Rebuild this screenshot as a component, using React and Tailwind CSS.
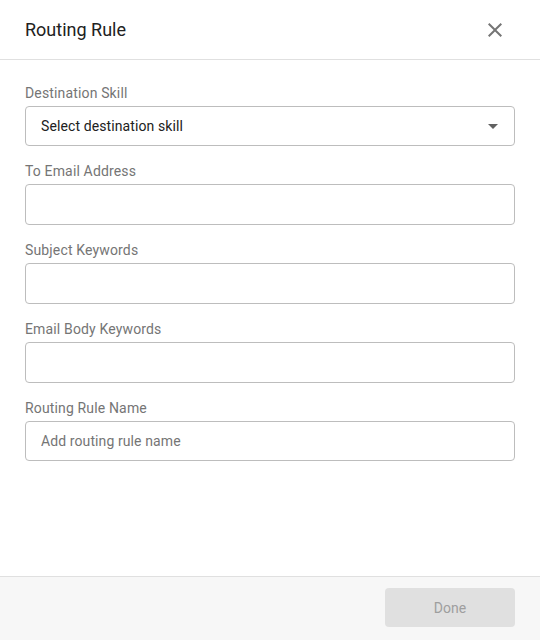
import React, { useState } from 'react';

const font = { fontFamily: 'Roboto, "Noto Sans", sans-serif' };

function CloseIcon() {
  return (
    <svg viewBox="0 0 24 24" className="w-6 h-6" fill="#757575">
      <path d="M19 6.41L17.59 5 12 10.59 6.41 5 5 6.41 10.59 12 5 17.59 6.41 19 12 13.41 17.59 19 19 17.59 13.41 12z" />
    </svg>
  );
}

function ArrowDropDown() {
  return (
    <svg viewBox="0 0 24 24" className="w-6 h-6" fill="#616161">
      <path d="M7 10l5 5 5-5z" />
    </svg>
  );
}

function Field({ label, children }) {
  return (
    <div className="flex flex-col">
      <label className="text-sm leading-5 tracking-[0.15px] text-[#757575] mb-[3px]">{label}</label>
      {children}
    </div>
  );
}

function TextInput({ value, onChange, placeholder, height = 'h-[41px]' }) {
  return (
    <input
      value={value}
      onChange={(e) => onChange(e.target.value)}
      placeholder={placeholder}
      className={`${height} w-full rounded border border-[#bdbdbd] px-[15px] text-sm tracking-[0.1px] text-[#212121] placeholder:text-[#757575] outline-none`}
      style={font}
    />
  );
}

export default function App() {
  const [form, setForm] = useState({
    toEmail: '',
    subject: '',
    body: '',
    name: '',
  });

  const set = (key) => (v) => setForm((f) => ({ ...f, [key]: v }));

  return (
    <div className="h-[640px] w-[540px] bg-white flex flex-col" style={font}>
      {/* Header */}
      <div className="h-[60px] flex items-center justify-between pl-[25px] pr-[33px] border-b border-[#e0e0e0] shrink-0">
        <h2 className="text-lg text-[#212121]">Routing Rule</h2>
        <button className="w-6 h-6 flex items-center justify-center">
          <CloseIcon />
        </button>
      </div>

      {/* Form */}
      <div className="flex-1 px-[25px] pt-[23px] flex flex-col gap-[15px]">
        <Field label="Destination Skill">
          <div className="h-[40px] w-full rounded border border-[#bdbdbd] flex items-center justify-between pl-[15px] pr-[9px]">
            <span className="text-sm tracking-[0.1px] text-[#212121]">Select destination skill</span>
            <ArrowDropDown />
          </div>
        </Field>
        <Field label="To Email Address">
          <TextInput value={form.toEmail} onChange={set('toEmail')} />
        </Field>
        <Field label="Subject Keywords">
          <TextInput value={form.subject} onChange={set('subject')} />
        </Field>
        <Field label="Email Body Keywords">
          <TextInput value={form.body} onChange={set('body')} />
        </Field>
        <Field label="Routing Rule Name">
          <TextInput
            value={form.name}
            onChange={set('name')}
            placeholder="Add routing rule name"
            height="h-[40px]"
          />
        </Field>
      </div>

      {/* Footer */}
      <div className="h-[64px] shrink-0 border-t border-[#e0e0e0] bg-[#f7f7f7] flex items-start justify-end pr-[25px] pt-[11px]">
        <button
          disabled
          className="w-[130px] h-[39px] rounded bg-[#e0e0e0] text-sm text-[#9e9e9e]"
        >
          Done
        </button>
      </div>
    </div>
  );
}
